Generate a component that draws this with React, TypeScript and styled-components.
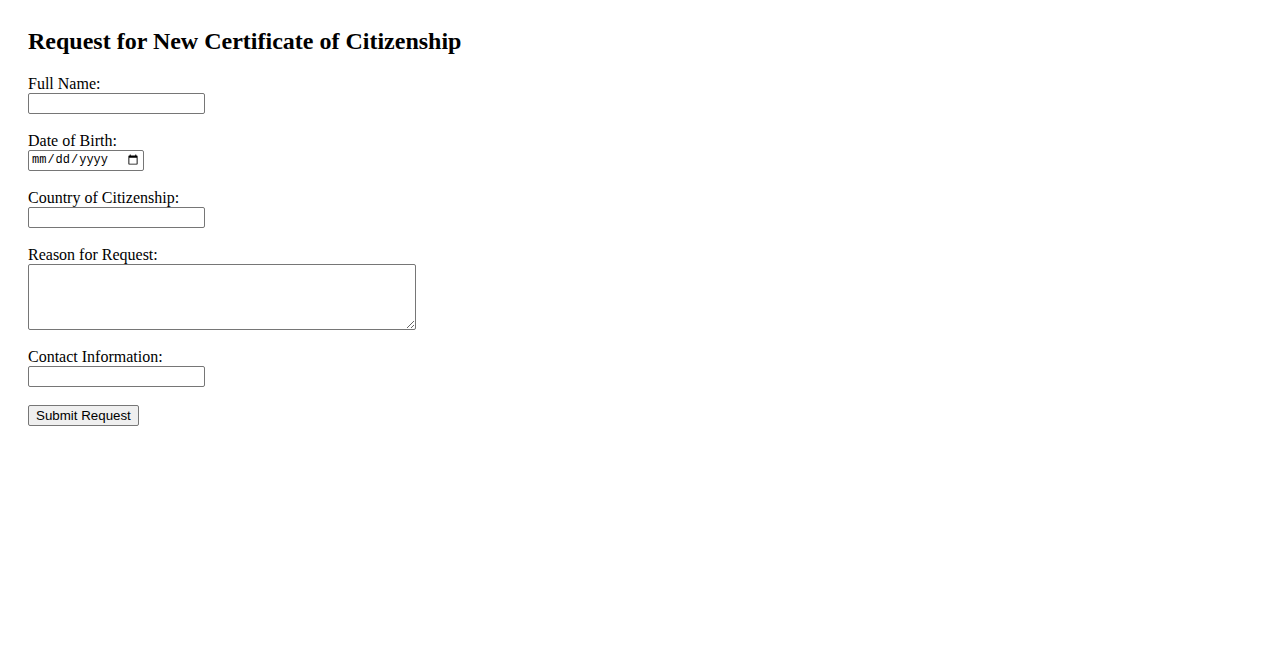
import { createGlobalStyle, styled } from 'styled-components';

const fields = [
  { id: 'fullName', label: 'Full Name:', kind: 'text' },
  { id: 'dob', label: 'Date of Birth:', kind: 'date' },
  { id: 'country', label: 'Country of Citizenship:', kind: 'text' },
  { id: 'reason', label: 'Reason for Request:', kind: 'area' },
  { id: 'contact', label: 'Contact Information:', kind: 'text' },
];

export default function App() {
  const rows = fields.map((field) => (
    <Field key={field.id}>
      <Label htmlFor={field.id}>{field.label}</Label>
      {field.kind === 'area' && <Reason id={field.id} />}
      {field.kind === 'date' && <DateInput id={field.id} type="date" />}
      {field.kind === 'text' && <TextInput id={field.id} type="text" />}
    </Field>
  ));

  return (
    <>
      <GlobalStyle />
      <Page>
        <Title>Request for New Certificate of Citizenship</Title>
        <Form onSubmit={(e) => e.preventDefault()}>
          {rows}
          <SubmitButton type="submit">Submit Request</SubmitButton>
        </Form>
      </Page>
    </>
  );
}

const GlobalStyle = createGlobalStyle`
  body {
    margin: 0;
    background: #fff;
    color: #000;
    font-family: "Liberation Serif", "Times New Roman", serif;
  }
`;

const Page = styled.div`
  padding: 28px 28px;
`;

const Title = styled.h2`
  margin: 0 0 18px;
  font-size: 24px;
  font-weight: bold;
  line-height: 27.5px;
`;

const Form = styled.form`
  display: flex;
  flex-direction: column;
  align-items: flex-start;
`;

const Field = styled.div`
  display: flex;
  flex-direction: column;
  align-items: flex-start;
  margin-bottom: 17px;
`;

const Label = styled.label`
  font-size: 16px;
  line-height: 19px;
`;

const TextInput = styled.input`
  box-sizing: border-box;
  width: 177px;
  height: 21px;
  margin: 0;
  padding: 1px 2px;
  border: 1px solid #767676;
  border-radius: 2px;
  font: 13.333px "Liberation Sans", Arial, sans-serif;
  background: #fff;
`;

const DateInput = styled(TextInput)`
  width: 116px;
  font-family: "Liberation Mono", "Courier New", monospace;
  font-size: 12px;
`;

const Reason = styled.textarea`
  box-sizing: border-box;
  width: 388px;
  height: 66px;
  margin: 0;
  padding: 2px;
  border: 1px solid #767676;
  border-radius: 2px;
  font: 13.333px "Liberation Mono", monospace;
`;

const SubmitButton = styled.button`
  box-sizing: border-box;
  height: 21px;
  margin: 1px 0 0;
  padding: 1px 7px;
  border: 1px solid #767676;
  border-radius: 2px;
  background: #efefef;
  color: #000;
  font: 13.333px "Liberation Sans", Arial, sans-serif;
`;
